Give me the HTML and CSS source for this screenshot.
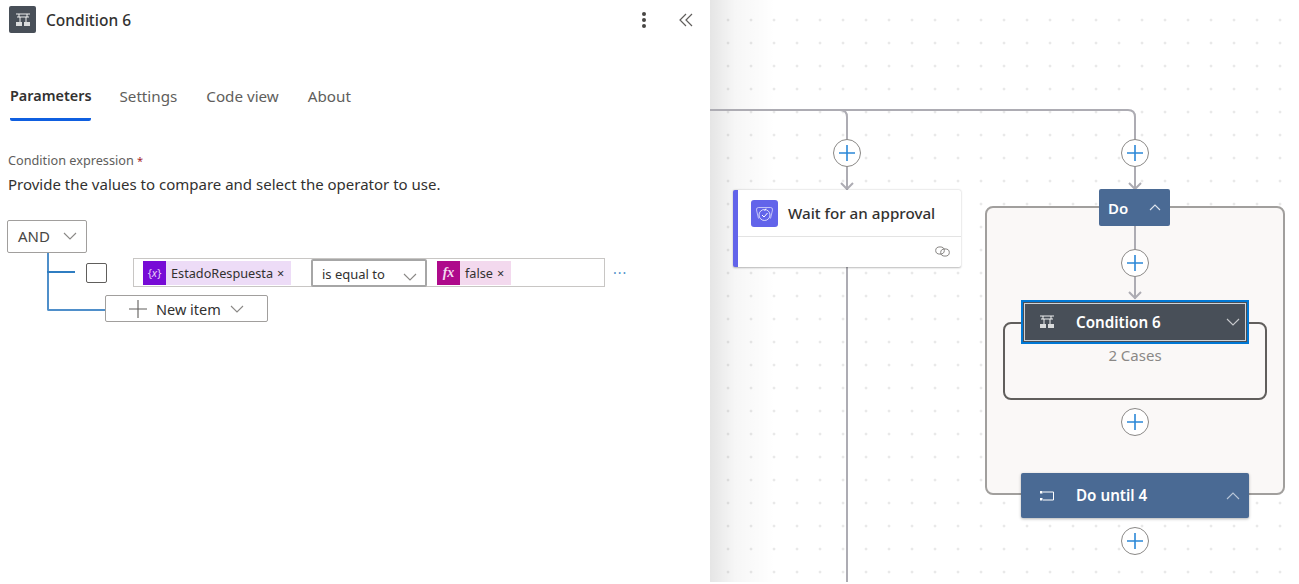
FILE: index.html
```html
<!DOCTYPE html>
<html lang="en">
<head>
    <meta charset="UTF-8">
    <meta name="viewport" content="width=device-width, initial-scale=1.0">
    <title>Condition 6</title>
    <link rel="stylesheet" href="styles.css">
</head>
<body>
    <div class="app">
        <section class="panel">
            <div class="panel-header">
                <div class="header-icon">
                    <svg width="16" height="16" viewBox="0 0 16 16"><path d="M1 2h14M2 5h12M4 2v3M12 2v3M5 5v5M11 5v5" fill="none" stroke="#fff" stroke-width="1" opacity=".9"/><path d="M1 10h6v4H1zM9 10h6v4H9z" fill="#fff" opacity=".8"/></svg>
                </div>
                <h2 class="panel-title">Condition 6</h2>
                <div class="kebab"><i></i><i></i><i></i></div>
                <svg class="collapse" width="14" height="14" viewBox="0 0 14 14"><path d="M7 1 1 7l6 6M13 1 7 7l6 6" fill="none" stroke="#605e5c" stroke-width="1.2"/></svg>
            </div>

            <div class="tabs">
                <div class="tab active">Parameters</div>
                <div class="tab">Settings</div>
                <div class="tab">Code view</div>
                <div class="tab">About</div>
            </div>

            <div class="form">
                <div class="field-label">Condition expression <span class="req">*</span></div>
                <div class="field-help">Provide the values to compare and select the operator to use.</div>

                <div class="and-select">AND
                    <svg width="14" height="8" viewBox="0 0 14 8"><path d="m1 1 6 6 6-6" fill="none" stroke="#8a8886" stroke-width="1.1"/></svg>
                </div>
                <div class="tree">
                    <div class="cond-row">
                        <div class="checkbox"></div>
                        <div class="expr">
                            <div class="expr-side left">
                                <span class="token var"><span class="token-icon">{<em>x</em>}</span>EstadoRespuesta <b>×</b></span>
                            </div>
                            <div class="operator">is equal to
                                <svg width="14" height="8" viewBox="0 0 14 8"><path d="m1 1 6 6 6-6" fill="none" stroke="#8a8886" stroke-width="1.1"/></svg>
                            </div>
                            <div class="expr-side right">
                                <span class="token fn"><span class="token-icon fx">fx</span>false <b>×</b></span>
                            </div>
                        </div>
                        <div class="more">···</div>
                    </div>
                    <div class="new-item">
                        <svg width="18" height="18" viewBox="0 0 18 18"><path d="M9 0v18M0 9h18" stroke="#605e5c" stroke-width="1.1"/></svg>
                        New item
                        <svg width="14" height="8" viewBox="0 0 14 8"><path d="m1 1 6 6 6-6" fill="none" stroke="#8a8886" stroke-width="1.1"/></svg>
                    </div>
                </div>
            </div>
        </section>

        <section class="canvas">
            <div class="scope-box"></div>
            <div class="cond-box"><span class="cases">2 Cases</span></div>

            <!-- connectors, coordinates are relative to the canvas -->
            <svg class="wires" width="589" height="584" viewBox="0 0 589 584">
                <g fill="none" stroke="#adacb3" stroke-width="2">
                    <path d="M0 110H130q7 0 7 7V190"/>
                    <path d="M130 110H418q7 0 7 7V189"/>
                    <path d="M131 183l6 6 6-6M419 183l6 6 6-6"/>
                    <path d="M137 267V582"/>
                    <path d="M425 226V299"/>
                    <path d="M419 292l6 6 6-6"/>
                </g>
            </svg>

            <div class="add" style="left:123px;top:139px"><svg width="18" height="18" viewBox="0 0 18 18"><path d="M9 1v16M1 9h16"/></svg></div>
            <div class="add" style="left:411px;top:139px"><svg width="18" height="18" viewBox="0 0 18 18"><path d="M9 1v16M1 9h16"/></svg></div>
            <div class="add" style="left:411px;top:249px"><svg width="18" height="18" viewBox="0 0 18 18"><path d="M9 1v16M1 9h16"/></svg></div>
            <div class="add" style="left:411px;top:408px"><svg width="18" height="18" viewBox="0 0 18 18"><path d="M9 1v16M1 9h16"/></svg></div>
            <div class="add" style="left:411px;top:527px"><svg width="18" height="18" viewBox="0 0 18 18"><path d="M9 1v16M1 9h16"/></svg></div>

            <div class="card">
                <div class="card-top">
                    <div class="card-icon">
                        <svg width="21" height="21" viewBox="0 0 21 21" fill="none" stroke="#fff" stroke-width="1"><path d="M4.500 15.500 2.500 7q-.4-2.500 2-2.500h12q2.400 0 2 2.500l-2 8.500" opacity=".6"/><circle cx="10.500" cy="12" r="5.500" opacity=".75"/><path d="m8 12 2 2 3.500-4"/><path d="m10.500 8 1.500-2.500" opacity=".8"/></svg>
                    </div>
                    <span class="card-title">Wait for an approval</span>
                </div>
                <div class="card-bottom">
                    <svg width="15" height="11" viewBox="0 0 15 11" fill="none" stroke="#7a7876" stroke-width=".9"><ellipse cx="5" cy="4.500" rx="4.300" ry="3.600"/><ellipse cx="10" cy="6.500" rx="4.300" ry="3.600"/></svg>
                </div>
            </div>

            <div class="do-head">Do
                <svg width="12" height="7" viewBox="0 0 12 7"><path d="m1 6 5-5 5 5" fill="none" stroke="#dfe5ee" stroke-width="1.100"/></svg>
            </div>

            <div class="node cond-node">
                <svg width="16" height="16" viewBox="0 0 16 16"><path d="M1 2h14M2 5h12M4 2v3M12 2v3M5 5v5M11 5v5" fill="none" stroke="#fff" stroke-width="1" opacity=".9"/><path d="M1 10h6v4H1zM9 10h6v4H9z" fill="#fff" opacity=".8"/></svg>
                <span class="node-title">Condition 6</span>
                <svg width="14" height="8" viewBox="0 0 14 8"><path d="m1 1 6 6 6-6" fill="none" stroke="#c8cacd" stroke-width="1.100"/></svg>
            </div>

            <div class="node until-node">
                <svg width="16" height="12" viewBox="0 0 16 12"><path d="M4 2h10.500v8H4" fill="none" stroke="#fff" stroke-width="1"/><path d="M1 1h2.500v2.500H1zM1 8h2.500v2.500H1z" fill="#fff"/></svg>
                <span class="node-title">Do until 4</span>
                <svg width="14" height="8" viewBox="0 0 14 8"><path d="m1 7 6-6 6 6" fill="none" stroke="#b9c6d8" stroke-width="1.100"/></svg>
            </div>
        </section>
    </div>
</body>
</html>
```

FILE: styles.css
```css
* {
    box-sizing: border-box;
}

html, body {
    margin: 0;
    height: 100%;
    overflow: hidden;
}

body {
    font-family: "Noto Sans", "Open Sans", sans-serif;
    color: #323130;
    background-color: white;
}

.app {
    display: flex;
    height: 584px;
}

/* left panel */
.panel {
    width: 710px;
    flex: none;
    background-color: white;
}

.panel-header {
    display: flex;
    align-items: center;
    height: 33px;
    margin-top: 3px;
    padding-left: 9px;
}

.header-icon {
    width: 27px;
    height: 27px;
    display: flex;
    align-items: center;
    justify-content: center;
    background-color: #484f58;
    border-radius: 2px;
}

.panel-title {
    margin: 0 0 0 10px;
    font-size: 15.5px;
    font-weight: 500;
    flex: 1;
}

.kebab {
    display: flex;
    flex-direction: column;
    gap: 2px;
    margin-right: 33px;
}

.kebab i {
    width: 4px;
    height: 4px;
    border-radius: 50%;
    background-color: #484644;
}

.collapse {
    margin-right: 17px;
}

.tabs {
    display: flex;
    gap: 29px;
    margin-top: 39px;
    padding-left: 10px;
}

.tab {
    font-size: 15.2px;
    color: #605e5c;
    height: 46px;
    padding-top: 11px;
    line-height: 20px;
    border-bottom: 3px solid transparent;
}

.tab.active {
    margin-right: -1px;
    font-size: 14.4px;
    color: #323130;
    font-weight: 600;
    border-bottom-color: #0f5fe0;
    border-radius: 0 0 2px 2px;
}

.form {
    padding: 30px 0 0 8px;
}

.field-label {
    font-size: 12.7px;
    line-height: 18px;
    color: #605e5c;
}

.req {
    color: #a4262c;
    font-size: 11px;
}

.field-help {
    margin-top: 4px;
    font-size: 15px;
    line-height: 20px;
}

.and-select {
    display: flex;
    align-items: center;
    justify-content: space-between;
    width: 80px;
    height: 33px;
    margin-top: 26px;
    margin-left: -1px;
    padding: 0 9px 2px 10px;
    font-size: 15px;
    border: 1px solid #a19f9d;
    border-radius: 2px;
    color: #484644;
}

.tree {
    position: relative;
    margin-left: 39px;
    padding-top: 5px;
}

.tree::before {
    content: "";
    position: absolute;
    left: 0;
    top: 0;
    width: 58px;
    height: 56px;
    border-left: 2px solid #4f8fca;
    border-bottom: 2px solid #4f8fca;
    border-bottom-left-radius: 2px;
}

.cond-row {
    position: relative;
    display: flex;
    align-items: center;
    height: 29px;
    padding-left: 39px;
}

.cond-row::before {
    content: "";
    position: absolute;
    left: 0;
    top: 13px;
    width: 28px;
    border-top: 2px solid #2f7dc1;
}

.checkbox {
    width: 21px;
    height: 20px;
    border: 1px solid #605e5c;
    border-radius: 2px;
    flex: none;
}

.expr {
    display: flex;
    width: 472px;
    height: 29px;
    margin-left: 26px;
    border: 1px solid #c8c6c4;
}

.expr-side {
    display: flex;
    align-items: center;
}

.expr-side.left {
    width: 177px;
    padding-left: 9px;
}

.expr-side.right {
    flex: 1;
    padding-left: 10px;
}

.operator {
    display: flex;
    align-items: center;
    justify-content: space-between;
    width: 116px;
    margin-bottom: -1px;
    padding: 2px 8px 0 9px;
    font-size: 13px;
    border: 2px solid #a6a6a6;
    border-radius: 2px;
}

.operator svg {
    margin-top: 6px;
}

.token {
    display: flex;
    align-items: center;
    height: 24px;
    font-size: 12.7px;
    padding-right: 7px;
}

.token b {
    font-weight: 400;
    margin-left: 4px;
}

.token.var {
    background-color: #eddcf7;
}

.token.fn {
    background-color: #f3d9ee;
}

.token-icon {
    display: flex;
    align-items: center;
    justify-content: center;
    width: 23px;
    height: 24px;
    margin-right: 5px;
    font-size: 11px;
    color: #e6cff6;
    background-color: #770bd6;
}

.token-icon.fx {
    font-family: "Liberation Serif", serif;
    font-size: 14px;
    font-style: italic;
    font-weight: 700;
    background-color: #ae0a8b;
    color: #f3d9ee;
}

.more {
    margin-left: 8px;
    font-size: 14px;
    letter-spacing: 1px;
    color: #4f8fca;
}

.new-item {
    display: flex;
    align-items: center;
    width: 163px;
    height: 27px;
    margin: 8px 0 0 58px;
    padding: 1px 0 0 23px;
    position: relative;
    background-color: white;
    font-size: 14.5px;
    border: 1px solid #a19f9d;
    border-radius: 2px;
}

.new-item svg:first-child {
    margin-right: 9px;
}

.new-item svg:last-child {
    margin-left: 9px;
}

/* canvas */
.canvas {
    position: relative;
    flex: 1;
    height: 582px;
    overflow: hidden;
    background-color: white;
    background-image:
        linear-gradient(to right, rgba(0, 0, 0, 0.1), rgba(0, 0, 0, 0.035) 25px, rgba(0, 0, 0, 0) 65px),
        radial-gradient(circle, #d2d2d2 0.9px, transparent 1.1px);
    background-size: auto, 23px 23px;
    background-position: 0 0, 6.5px 8.5px;
}

.wires {
    position: absolute;
    left: 0;
    top: 0;
}

.add {
    position: absolute;
    display: flex;
    align-items: center;
    justify-content: center;
    width: 28px;
    height: 28px;
    background-color: white;
    border: 1.5px solid #8a8886;
    border-radius: 50%;
}

.add path {
    stroke: #2b88d8;
    stroke-width: 1.6;
}

.card {
    position: absolute;
    left: 23px;
    top: 190px;
    width: 228px;
    height: 77px;
    background-color: white;
    border-left: 5px solid #6264ea;
    border-radius: 2px;
    box-shadow: 0 0.5px 2px rgba(0, 0, 0, 0.28);
}

.card-top {
    display: flex;
    align-items: center;
    height: 47px;
    padding-left: 13px;
    border-bottom: 1px solid #e3e3e3;
}

.card-icon {
    width: 27px;
    height: 27px;
    display: flex;
    align-items: center;
    justify-content: center;
    background-color: #6264ea;
    border-radius: 3px;
}

.card-title {
    margin-left: 10px;
    font-size: 15.2px;
    font-weight: 500;
}

.card-bottom {
    display: flex;
    justify-content: flex-end;
    padding: 9px 11px 0 0;
}

.scope-box {
    position: absolute;
    left: 275px;
    top: 206px;
    width: 300px;
    height: 289px;
    background-color: #faf8f7;
    border: 2px solid #a19f9d;
    border-radius: 8px;
}

.cond-box {
    position: absolute;
    left: 293px;
    top: 322px;
    width: 264px;
    height: 78px;
    padding-top: 20px;
    border: 2px solid #605e5c;
    border-radius: 8px;
    text-align: center;
}

.cases {
    font-size: 15px;
    color: #8a8886;
}

.do-head {
    position: absolute;
    left: 389px;
    top: 189px;
    width: 71px;
    height: 37px;
    display: flex;
    align-items: center;
    justify-content: space-between;
    padding: 0 9px;
    font-size: 15px;
    font-weight: 600;
    color: white;
    background-color: #4a6a94;
    border-radius: 2px;
}

.node {
    position: absolute;
    left: 311px;
    width: 228px;
    display: flex;
    align-items: center;
    padding: 0 9px 0 18px;
    color: white;
    font-size: 15.2px;
    font-weight: 600;
}

.node-title {
    flex: 1;
    margin-left: 21px;
    margin-top: -1px;
}

.cond-node {
    top: 300px;
    height: 44px;
    background-color: #484f58;
    border: 3px solid transparent;
    outline: 2px solid #0078d4;
    outline-offset: -2px;
    box-shadow: inset 0 0 0 1px #d0d3d6;
    padding-left: 15px;
    padding-right: 6px;
}

.until-node {
    top: 473px;
    height: 45px;
    background-color: #4a6a94;
    border-radius: 2px;
    box-shadow: 0 1px 3px rgba(0, 0, 0, 0.3);
}
```
